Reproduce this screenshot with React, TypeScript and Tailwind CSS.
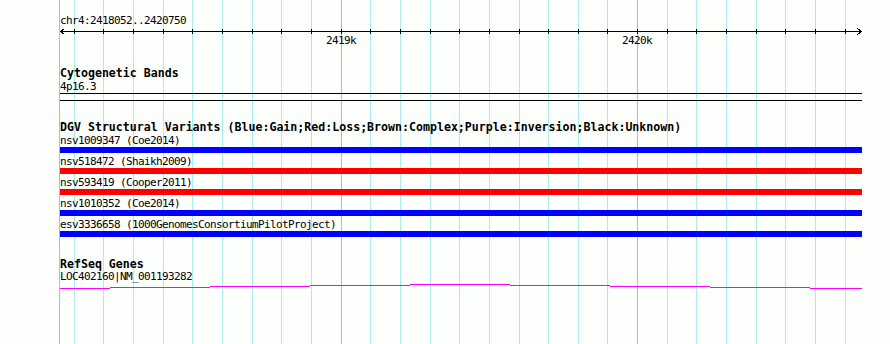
import React from 'react';

const START = 2418052;
const END = 2420750;
const px = (pos: number) => Math.floor(60 + ((pos - START) * 800) / (END - START));

const ticks = Array.from({ length: 27 }, (_, i) => 2418100 + i * 100);

const variants = [
  { name: 'nsv1009347 (Coe2014)', color: 'bg-[#0000ff]' },
  { name: 'nsv518472 (Shaikh2009)', color: 'bg-[#ff0000]' },
  { name: 'nsv593419 (Cooper2011)', color: 'bg-[#ff0000]' },
  { name: 'nsv1010352 (Coe2014)', color: 'bg-[#0000ff]' },
  { name: 'esv3336658 (1000GenomesConsortiumPilotProject)', color: 'bg-[#0000ff]' },
];

// intron "hat" drawn as 1px steps
const hat: [number, number, number][] = [
  [60, 110, 288],
  [110, 210, 287],
  [210, 310, 286],
  [310, 410, 285],
  [410, 510, 284],
  [510, 610, 285],
  [610, 710, 286],
  [710, 810, 287],
  [810, 862, 288],
];

function Grid() {
  return (
    <svg className="absolute inset-0" width={890} height={344} shapeRendering="crispEdges">
      <rect x={59} y={0} width={1} height={344} fill="#92c9e0" />
      {ticks.map((t) => (
        <rect
          key={t}
          x={px(t)}
          y={0}
          width={1}
          height={344}
          fill={t % 1000 === 0 ? '#92c9e0' : '#aaeced'}
        />
      ))}
    </svg>
  );
}

function Ruler() {
  return (
    <div className="relative h-[20px]">
      <svg className="block" width={802} height={8} shapeRendering="crispEdges">
        <rect x={0} y={4} width={802} height={1} fill="#000" />
        {ticks.map((t) => (
          <rect key={t} x={px(t) - 60} y={2} width={1} height={5} fill="#000" />
        ))}
        <polyline points="4.5,1.5 0.5,4.5 4.5,7.5" fill="none" stroke="#000" strokeWidth={1} />
        <polyline points="797.5,1.5 801.5,4.5 797.5,7.5" fill="none" stroke="#000" strokeWidth={1} />
      </svg>
      {[2419000, 2420000].map((t) => (
        <span
          key={t}
          className="absolute top-[8px] text-[11px] tracking-[-0.62px] leading-[12px]"
          style={{ left: px(t) - 60 - 15 }}
        >
          {t / 1000}k
        </span>
      ))}
    </div>
  );
}

export default function App() {
  return (
    <div className="relative w-[890px] h-[344px] overflow-hidden bg-[#fdfffd] text-black font-['DejaVu_Sans_Mono','Liberation_Mono',monospace]">
      <Grid />
      <div className="relative w-[862px] pl-[60px] pt-[15px]">
        <div className="text-[11px] tracking-[-0.62px] leading-[12px]">chr4:2418052..2420750</div>
        <Ruler />

        <div className="mt-[20px] text-[11.6px] leading-[13px] font-bold">Cytogenetic Bands</div>
        <div className="mt-[1px] text-[11px] tracking-[-0.62px] leading-[12px]">4p16.3</div>
        <div className="h-[8px] border-y border-black" />

        <div className="mt-[20px] text-[11.6px] leading-[13px] font-bold whitespace-nowrap">
          DGV Structural Variants (Blue:Gain;Red:Loss;Brown:Complex;Purple:Inversion;Black:Unknown)
        </div>
        <div className="mt-[1px] flex flex-col gap-[3px]">
          {variants.map((v) => (
            <div key={v.name}>
              <div className="text-[11px] tracking-[-0.62px] leading-[12px] whitespace-nowrap">{v.name}</div>
              <div className={`h-[6px] ${v.color}`} />
            </div>
          ))}
        </div>

        <div className="mt-[21px] text-[11.6px] leading-[13px] font-bold">RefSeq Genes</div>
        <div className="text-[11px] tracking-[-0.62px] leading-[12px]">LOC402160|NM_001193282</div>
        <svg className="block" width={802} height={8} shapeRendering="crispEdges">
          {hat.map(([a, b, y]) => (
            <rect key={a} x={a - 60} y={y - 283} width={b - a} height={1} fill="#ff00ff" />
          ))}
        </svg>
      </div>
    </div>
  );
}
